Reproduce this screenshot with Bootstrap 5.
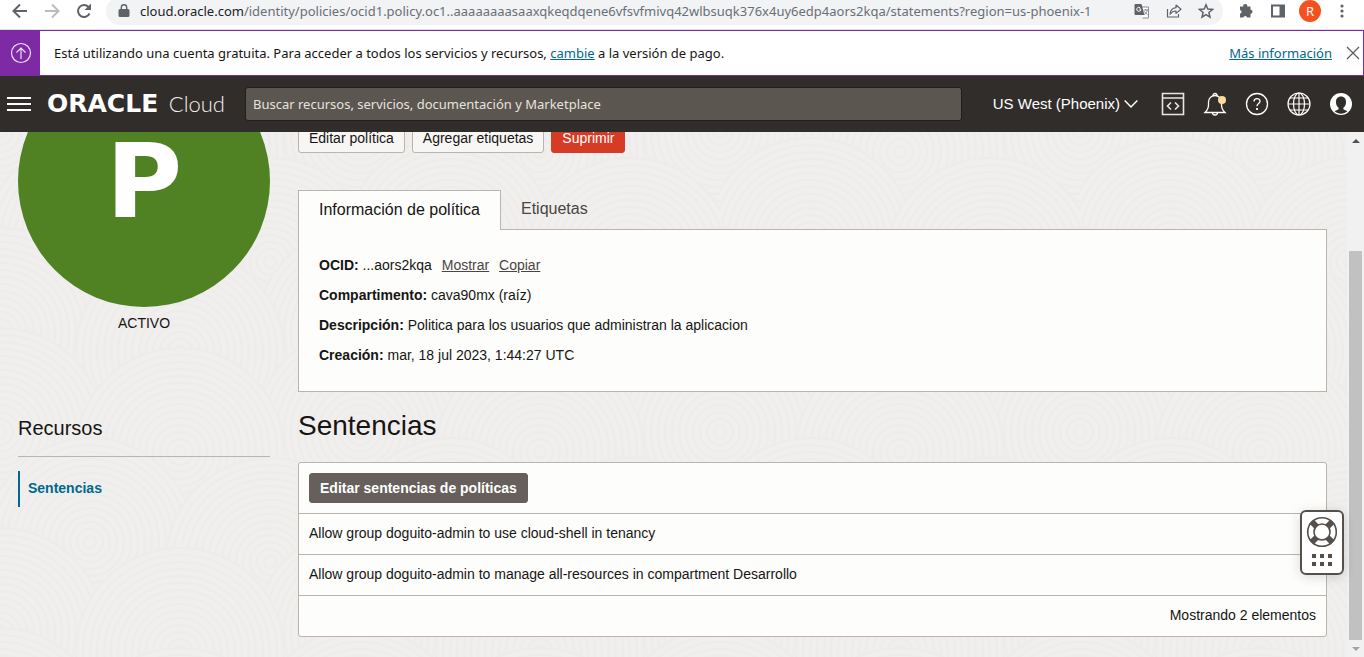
<!DOCTYPE html>
<html lang="es">
<head>
<meta charset="utf-8">
<meta name="viewport" content="width=device-width, initial-scale=1">
<title>Oracle Cloud - Sentencias</title>
<link href="https://cdn.jsdelivr.net/npm/bootstrap@5.3.0/dist/css/bootstrap.min.css" rel="stylesheet">
<style>
body{font-family:"Liberation Sans",Arial,sans-serif;font-size:14px;line-height:20px;color:#161513;background:#f0efee}
button{font-family:inherit}
svg{display:block;flex:none}
.ui-font{font-family:"Noto Sans","Open Sans",sans-serif}
.icon-btn{background:none;border:0;padding:0;color:inherit;display:block;flex:none}
/* browser toolbar */
.toolbar{height:30px;background:#fff;border-bottom:1px solid #dee1e6;color:#5f6368;overflow:hidden}
.toolbar-row{height:28px;margin-top:-3px;padding-left:12px;padding-right:14px}
.address{height:28px;border-radius:14px;background:#f1f3f4;padding-left:12px;padding-right:9px;margin-left:14px;margin-right:15px}
.address-text{font-size:13px;color:#6b6f74;white-space:nowrap;overflow:hidden;margin-left:10px}
.address-text b{font-weight:400;color:#202124}
.avatar{width:22px;height:22px;margin:0 13px;background:#f4511e;font-size:13px;line-height:22px;color:#fff}
/* free-tier banner */
.promo{height:46px;border:1px solid #7f2aa5;background:#fff;font-size:13px;padding-right:3px}
.promo a{color:#00688c}
.promo-mark{width:39px;background:#7f2aa5}
.promo-text{margin-left:14px}
.promo-close{margin-left:14px}
/* console header */
.console-head{height:56px;background:#312d2a;color:#fff;padding-left:7px;padding-right:11px}
.brand-link{width:178px;margin-left:16px;margin-right:20px}
.brand-name{font:700 25px/28px "DejaVu Sans",sans-serif;color:#fff}
.brand-sub{font:300 22px/28px Lato,sans-serif;color:#f1efed}
.finder{height:34px;background:#5b564f;border:1px solid #201e1c;border-radius:3px;color:#fff;font-size:13px;padding:0 7px;min-width:0}
.finder::placeholder{color:#e6e3df;opacity:1}
.region{font-size:15px;margin-left:31px;margin-right:23px}
.head-icons{gap:18px}
/* scrolled page */
.page-area{background-color:#f0efee;background-image:url("data:image/svg+xml,%3Csvg xmlns='http://www.w3.org/2000/svg' xmlns:xlink='http://www.w3.org/1999/xlink' width='360' height='300'%3E%3Cdefs%3E%3Cg id='r' fill='none' stroke='%23edeceb' stroke-width='2'%3E%3Ccircle r='104' fill='%23f0efee'/%3E%3Ccircle r='97'/%3E%3Ccircle r='90'/%3E%3Ccircle r='83'/%3E%3Ccircle r='76'/%3E%3Ccircle r='69'/%3E%3Ccircle r='62'/%3E%3Ccircle r='55'/%3E%3Ccircle r='48'/%3E%3Ccircle r='41'/%3E%3Ccircle r='34'/%3E%3Ccircle r='27'/%3E%3Ccircle r='20'/%3E%3Ccircle r='13'/%3E%3Ccircle r='6'/%3E%3C/g%3E%3C/defs%3E%3Cuse xlink:href='%23r' x='0' y='0'/%3E%3Cuse xlink:href='%23r' x='360' y='0'/%3E%3Cuse xlink:href='%23r' x='180' y='20'/%3E%3Cuse xlink:href='%23r' x='90' y='110'/%3E%3Cuse xlink:href='%23r' x='270' y='130'/%3E%3Cuse xlink:href='%23r' x='0' y='200'/%3E%3Cuse xlink:href='%23r' x='360' y='200'/%3E%3Cuse xlink:href='%23r' x='180' y='220'/%3E%3Cuse xlink:href='%23r' x='0' y='300'/%3E%3Cuse xlink:href='%23r' x='360' y='300'/%3E%3Cuse xlink:href='%23r' x='180' y='320'/%3E%3C/svg%3E")}
.scrolled{margin-top:-77px;padding:0 20px 20px 18px;gap:28px}
.side{width:252px;flex:none}
.policy-disc{width:252px;height:252px;background:#508223;color:#fff;font:700 104px/100px "DejaVu Sans",sans-serif}
.state{padding-top:6px}
.side h2{font-size:20px;line-height:24px;font-weight:400;margin:83px 0 16px}
.side-rule{border-top:1px solid #bab4ac;padding-top:14px}
.side-link{display:block;border-left:2px solid #00688c;padding:7px 8px 9px;line-height:20px;color:#00688c;font-weight:700;text-decoration:none}
.actions{padding-top:68px;gap:7px}
.act{height:30px;font-size:14px;line-height:18px;padding:5px 10px;border-radius:3px}
.act-plain{background:#f7f6f5;border-color:#bab4ac;color:#161513}
.act-red{background:#d63b25;border-color:#d63b25;color:#fff}
.act-dark{background:#665f5b;border-color:#665f5b;color:#fff;font-weight:700}
.tab-row{margin-top:37px}
.tab-btn{height:38px;font-size:16px;line-height:24px;padding:0 20px;border:0;background:none;color:#4a4542}
.tab-btn.active{height:40px;background:#fdfdfc;border:1px solid #bab4ac;border-bottom:0;color:#161513;margin-bottom:-1px;padding-bottom:2px;position:relative}
.info{background:#fdfdfc;border:1px solid #bab4ac;padding:20px 20px 21px;line-height:30px}
.info a{color:#4a4542;margin-left:6px}
.main-title{font-size:28px;line-height:32px;font-weight:400;margin:18px 0 20px}
.rules{width:100%;background:#fdfdfc;border:1px solid #bab4ac;border-radius:3px;border-collapse:separate;border-spacing:0}
.rules td{padding:9px 10px 11px;line-height:20px}
.rules th{padding:10px;line-height:0;font-weight:400}
.rules tbody td,.rules tfoot td{border-top:1px solid #bab4ac}
.track{width:17px;flex:none;background:#f1f1f1;padding:0 2px}
.track-arrow{height:17px}
.track-gap{flex:102 0 0}
.track-thumb{flex:389 0 0;background:#c1c1c1}
.help-tab{right:20px;bottom:82px;width:44px;height:65px;background:#fff;border:2px solid #55504b;border-radius:6px;box-shadow:0 2px 12px rgba(0,0,0,.15);padding:4px 0 0}
</style>
</head>
<body class="vh-100 overflow-hidden d-flex flex-column">

<div class="toolbar ui-font flex-shrink-0">
  <div class="toolbar-row d-flex align-items-center">
    <button class="icon-btn" aria-label="Atrás"><svg width="16" height="16" viewBox="0 0 16 16" fill="none" stroke="#5f6368" stroke-width="2"><path d="M15 8H2M8 1.500 1.500 8 8 14.500"/></svg></button>
    <button class="icon-btn ms-3" aria-label="Adelante"><svg width="16" height="16" viewBox="0 0 16 16" fill="none" stroke="#babcbe" stroke-width="2"><path d="M1 8h13M8 1.500 14.500 8 8 14.500"/></svg></button>
    <button class="icon-btn ms-3" aria-label="Recargar"><svg width="16" height="16" viewBox="0 0 16 16" fill="none" stroke="#5f6368" stroke-width="2"><path d="M13.500 10.500A6 6 0 1 1 12.500 4"/><path d="M15 0.500V7H8.500z" fill="#5f6368" stroke="none"/></svg></button>
    <div class="address d-flex align-items-center flex-fill overflow-hidden">
      <svg width="12" height="14" viewBox="0 0 12 14"><path d="M2 5h8a1.500 1.500 0 0 1 1.500 1.500v5A1.500 1.500 0 0 1 10 13H2a1.500 1.500 0 0 1-1.500-1.500v-5A1.500 1.500 0 0 1 2 5z" fill="#5f6368"/><path d="M3.300 6V3.500a2.700 2.700 0 0 1 5.400 0V6" fill="none" stroke="#5f6368" stroke-width="1.400"/></svg>
      <div class="address-text flex-fill"><b>cloud.oracle.com</b>/identity/policies/ocid1.policy.oc1..aaaaaaaasaaxqkeqdqene6vfsvfmivq42wlbsuqk376x4uy6edp4aors2kqa/statements?region=us-phoenix-1</div>
      <button class="icon-btn" aria-label="Traducir"><svg width="16" height="16" viewBox="0 0 16 16"><path d="M6 4h8.500v11H8.500" fill="#fff" stroke="#8a8d91"/><path d="M1.500 1h6l3 11h-9A1 1 0 0 1 .5 11V2a1 1 0 0 1 1-1z" fill="#5f6368"/><path d="M7 6H5.200M6.800 6.300A2 2 0 1 1 6 4.700" stroke="#fff" fill="none"/><path d="M9.500 7H14M11.700 6v1M13.200 7c-.4 2.200-1.500 3.600-3 4.600M10.500 8.500c.7 1.400 1.600 2.300 3 3" stroke="#7a7d81" fill="none" stroke-width=".9"/></svg></button>
      <button class="icon-btn ms-3" aria-label="Compartir"><svg width="16" height="16" viewBox="0 0 16 16" fill="none" stroke="#5f6368" stroke-width="1.200"><path d="M1.500 6v8h11v-3"/><path d="M10 2l5 4.200-5 4.200V8C7.500 8 5.500 9 4 11.200 4.300 7.500 6.500 5 10 4.600z" stroke-linejoin="round"/></svg></button>
      <button class="icon-btn ms-3" aria-label="Favorito"><svg width="16" height="16" viewBox="0 0 16 16" fill="none" stroke="#5f6368" stroke-width="1.500"><path d="M8 1.800l1.800 4.300 4.700.4-3.600 3 1.100 4.600L8 11.600l-4 2.500 1.100-4.600-3.600-3 4.700-.4z"/></svg></button>
    </div>
    <button class="icon-btn" aria-label="Extensiones"><svg width="16" height="16" viewBox="0 0 16 16" fill="#5f6368"><path d="M2 3.500h3.300a2 2 0 1 1 3.900 0h3.300v3.300a2 2 0 1 1 0 4V14.500H9.200a2 2 0 0 0-3.900 0H2v-3.700a2 2 0 0 0 0-3.900z"/></svg></button>
    <button class="icon-btn ms-3" aria-label="Panel lateral"><svg width="16" height="16" viewBox="0 0 16 16"><path d="M2 2.500h12v11H2z" fill="#fff" stroke="#5f6368" stroke-width="2"/><path d="M9.500 2H15v12H9.500z" fill="#5f6368"/></svg></button>
    <button class="icon-btn avatar rounded-circle text-center">R</button>
    <button class="icon-btn" aria-label="Menú"><svg width="16" height="16" viewBox="0 0 16 16" fill="#5f6368"><circle cx="8" cy="3" r="1.600"/><circle cx="8" cy="8" r="1.600"/><circle cx="8" cy="13" r="1.600"/></svg></button>
  </div>
</div>

<div class="promo ui-font d-flex align-items-center flex-shrink-0">
  <div class="promo-mark d-flex align-items-center justify-content-center align-self-stretch">
    <svg width="22" height="22" viewBox="0 0 22 22" fill="none" stroke="#f0e0f6" stroke-width="1.200"><circle cx="11" cy="11" r="9.500"/><path d="M11 17V6M6.500 10.500 11 6l4.500 4.500"/></svg>
  </div>
  <div class="promo-text flex-fill">Está utilizando una cuenta gratuita. Para acceder a todos los servicios y recursos, <a href="#">cambie</a> a la versión de pago.</div>
  <a href="#">Más información</a>
  <button class="icon-btn promo-close" aria-label="Cerrar"><svg width="14" height="14" viewBox="0 0 14 14" fill="none" stroke="#5c5854" stroke-width="1.200"><path d="M1 1l12 12M13 1 1 13"/></svg></button>
</div>

<header class="console-head d-flex align-items-center flex-shrink-0">
  <button class="icon-btn" aria-label="Menú de navegación"><svg width="24" height="16" viewBox="0 0 24 16" fill="#fff"><path d="M0 1h24v2H0zM0 7h24v2H0zM0 13h24v2H0z"/></svg></button>
  <a href="#" class="brand-link d-flex flex-shrink-0 align-items-center justify-content-between text-decoration-none"><span class="brand-name">ORACLE</span><span class="brand-sub">Cloud</span></a>
  <input class="finder ui-font flex-fill" type="text" aria-label="Buscar" placeholder="Buscar recursos, servicios, documentación y Marketplace">
  <button class="icon-btn region d-flex align-items-center gap-1">US West (Phoenix)<svg width="14" height="10" viewBox="0 0 14 10" fill="none" stroke="#fff" stroke-width="1.500"><path d="M.7 1.500 7 8l6.300-6.500"/></svg></button>
  <div class="head-icons d-flex align-items-center">
    <button class="icon-btn" aria-label="Herramientas"><svg width="24" height="24" viewBox="0 0 24 24" fill="none" stroke="#e8e6e3" stroke-width="1.600"><path d="M1.500 1.500h21v21h-21zM1.500 6h21M10 10.500 6.500 14l3.500 3.500M14 10.500l3.500 3.500-3.500 3.500"/></svg></button>
    <button class="icon-btn" aria-label="Anuncios"><svg width="24" height="24" viewBox="0 0 24 24" fill="none" stroke="#fff" stroke-width="1.300"><path d="M2 20.500h20c-2.200-2-3.500-4-3.500-8V10a6.500 6.500 0 0 0-13 0v2.500c0 4-1.300 6-3.500 8zM10 3.500a2 2 0 0 1 4 0M9.500 20.500a2.500 2.500 0 0 0 5 0"/><circle cx="19" cy="8" r="4" fill="#f7dd9b" stroke="none"/></svg></button>
    <button class="icon-btn" aria-label="Ayuda"><svg width="24" height="24" viewBox="0 0 24 24" fill="none" stroke="#fff" stroke-width="1.300"><circle cx="12" cy="12" r="10.500"/><path d="M9 9.500c0-4 6-3.800 6-.3 0 2.300-3 2.300-3 5"/><path d="M12 16v2" stroke-width="1.800"/></svg></button>
    <button class="icon-btn" aria-label="Idioma"><svg width="24" height="24" viewBox="0 0 24 24" fill="none" stroke="#fff" stroke-width="1.200"><circle cx="12" cy="12" r="11"/><ellipse cx="12" cy="12" rx="5.500" ry="11"/><path d="M12 1v22M1 12h22M3 6h18M3 18h18"/></svg></button>
    <button class="icon-btn" aria-label="Perfil"><svg width="24" height="24" viewBox="0 0 24 24"><circle cx="12" cy="12" r="11" fill="#fff"/><path d="M12 4.500c3.300 0 5 2.300 5 5.500 0 2.700-1 4.600-2.600 5.800v1.500l4 1.900c-3.500 3.300-9.300 3.300-12.800 0l4-1.900v-1.500C8 14.600 7 12.700 7 10c0-3.200 1.700-5.500 5-5.500z" fill="#312d2a"/></svg></button>
  </div>
</header>

<div class="flex-fill d-flex overflow-hidden position-relative">
  <div class="page-area flex-fill overflow-hidden">
    <div class="scrolled d-flex">
      <aside class="side">
        <div class="policy-disc rounded-circle d-flex align-items-center justify-content-center">P</div>
        <div class="state text-center">ACTIVO</div>
        <h2>Recursos</h2>
        <nav class="side-rule"><a class="side-link" href="#">Sentencias</a></nav>
      </aside>
      <main class="flex-fill">
        <div class="actions d-flex">
          <button class="btn act act-plain">Editar política</button>
          <button class="btn act act-plain">Agregar etiquetas</button>
          <button class="btn act act-red">Suprimir</button>
        </div>
        <div class="tab-row d-flex align-items-start" role="tablist">
          <button class="tab-btn active" role="tab">Información de política</button>
          <button class="tab-btn" role="tab">Etiquetas</button>
        </div>
        <section class="info">
          <div><strong>OCID:</strong> ...aors2kqa <a href="#">Mostrar</a> <a href="#">Copiar</a></div>
          <div><strong>Compartimento:</strong> cava90mx (raíz)</div>
          <div><strong>Descripción:</strong> Politica para los usuarios que administran la aplicacion</div>
          <div><strong>Creación:</strong> mar, 18 jul 2023, 1:44:27 UTC</div>
        </section>
        <h1 class="main-title">Sentencias</h1>
        <table class="rules">
          <thead><tr><th><button class="btn act act-dark">Editar sentencias de políticas</button></th></tr></thead>
          <tbody>
            <tr><td>Allow group doguito-admin to use cloud-shell in tenancy</td></tr>
            <tr><td>Allow group doguito-admin to manage all-resources in compartment Desarrollo</td></tr>
          </tbody>
          <tfoot><tr><td class="text-end">Mostrando 2 elementos</td></tr></tfoot>
        </table>
      </main>
    </div>
  </div>
  <div class="track d-flex flex-column" aria-hidden="true">
    <div class="track-arrow d-flex align-items-center justify-content-center"><svg width="8" height="4" viewBox="0 0 8 4" fill="#505050"><path d="M0 4l4-4 4 4z"/></svg></div>
    <div class="track-gap"></div>
    <div class="track-thumb"></div>
    <div class="track-arrow d-flex align-items-center justify-content-center"><svg width="8" height="4" viewBox="0 0 8 4" fill="#a3a3a3"><path d="M0 0l4 4 4-4z"/></svg></div>
  </div>
  <button class="help-tab position-absolute d-flex flex-column align-items-center" aria-label="Soporte">
    <svg width="32" height="32" viewBox="0 0 32 32" fill="none" stroke="#55504b"><g stroke-width="6"><path d="M5.500 5.500l6 6M26.500 5.500l-6 6M5.500 26.500l6-6M26.500 26.500l-6-6"/></g><circle cx="16" cy="16" r="14.300" stroke-width="1.600"/><circle cx="16" cy="16" r="8" fill="#fff" stroke-width="1.600"/></svg>
    <svg class="mt-1" width="20" height="16" viewBox="0 0 20 16" fill="#55504b"><path d="M0 2h4v4H0zM8 2h4v4H8zM16 2h4v4h-4zM0 10h4v4H0zM8 10h4v4H8zM16 10h4v4h-4z"/></svg>
  </button>
</div>

<script src="https://cdn.jsdelivr.net/npm/bootstrap@5.3.0/dist/js/bootstrap.bundle.min.js"></script>
</body>
</html>
